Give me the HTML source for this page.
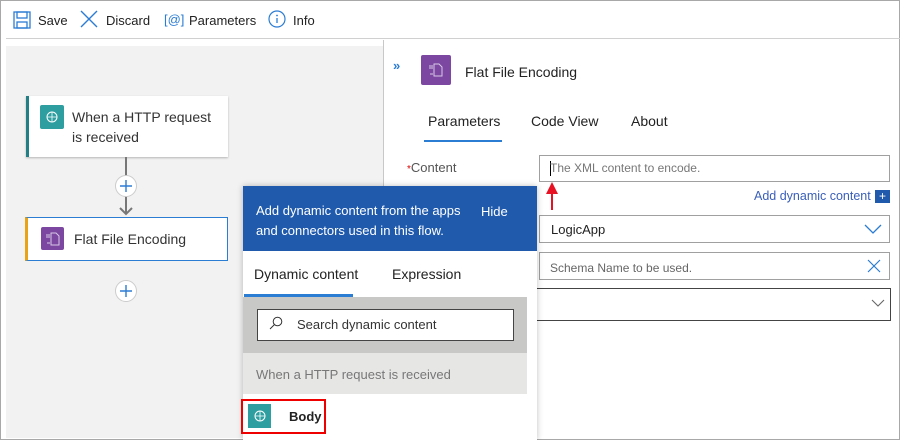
<!DOCTYPE html>
<html><head><style>
*{box-sizing:border-box;margin:0;padding:0}
body{width:900px;height:440px;overflow:hidden;background:#fff;font-family:"Liberation Sans",sans-serif;position:relative;color:#222}
.a{position:absolute}
.t{font-size:13px;white-space:nowrap}
</style></head><body>
<div class="a" style="left:0;top:0;width:900px;height:440px;border:1px solid #a8a8a8"></div>
<!-- toolbar -->
<svg class="a" style="left:13px;top:11px" width="18" height="18" viewBox="0 0 18 18"><rect x="1" y="1" width="16" height="16" fill="none" stroke="#2b7cd3" stroke-width="1.3"/><rect x="4" y="1" width="10" height="6" fill="none" stroke="#2b7cd3" stroke-width="1.3"/><rect x="4" y="11" width="10" height="6" fill="none" stroke="#2b7cd3" stroke-width="1.3"/></svg>
<div class="a t" style="left:38px;top:13px">Save</div>
<svg class="a" style="left:80px;top:10px" width="18" height="18"><path d="M1 1L17 17M17 1L1 17" stroke="#2b7cd3" stroke-width="1.4"/></svg>
<div class="a t" style="left:106px;top:13px">Discard</div>
<div class="a t" style="left:164px;top:12px;color:#2b7cd3">[@]</div>
<div class="a t" style="left:189px;top:13px">Parameters</div>
<svg class="a" style="left:268px;top:10px" width="18" height="18"><circle cx="9" cy="9" r="8" fill="none" stroke="#2b7cd3" stroke-width="1.2"/><path d="M9 8v5" stroke="#2b7cd3" stroke-width="1.3"/><circle cx="9" cy="5.5" r="0.9" fill="#2b7cd3"/></svg>
<div class="a t" style="left:293px;top:13px">Info</div>
<div class="a" style="left:6px;top:38px;width:894px;height:1px;background:#d0d0d0"></div>
<!-- canvas -->
<div class="a" style="left:6px;top:46px;width:377px;height:392px;background:#f2f2f2"></div>
<div class="a" style="left:383px;top:40px;width:1px;height:398px;background:#c8c8c8"></div>
<div class="a" style="left:26px;top:96px;width:202px;height:61px;background:#fff;border-left:3px solid #237f86;box-shadow:0 1px 2px rgba(0,0,0,.25)"></div>
<div class="a" style="left:40px;top:105px;width:24px;height:24px;background:#2f9ea0;border-radius:2px"></div>
<svg class="a" style="left:45px;top:110px" width="14" height="14"><circle cx="7" cy="7" r="5" fill="none" stroke="#fff"/><path d="M2 7h10M7 2v10" stroke="#fff" stroke-width=".8"/></svg>
<div class="a" style="left:72px;top:107px;font-size:14px;line-height:20px;color:#333">When a HTTP request<br>is received</div>
<div class="a" style="left:125px;top:157px;width:2px;height:56px;background:#777"></div>
<svg class="a" style="left:119px;top:205px" width="14" height="12"><path d="M1 3l6 6 6-6" fill="none" stroke="#777" stroke-width="2"/></svg>
<div class="a" style="left:115px;top:175px;width:22px;height:22px;border-radius:50%;background:#fff;border:1px solid #ccc"></div>
<div class="a" style="left:115px;top:280px;width:22px;height:22px;border-radius:50%;background:#fff;border:1px solid #ccc"></div>
<svg class="a" style="left:115px;top:175px" width="22" height="22"><path d="M11 5v12M5 11h12" stroke="#2b7cd3" stroke-width="1.4"/></svg>
<svg class="a" style="left:115px;top:280px" width="22" height="22"><path d="M11 5v12M5 11h12" stroke="#2b7cd3" stroke-width="1.4"/></svg>
<div class="a" style="left:25px;top:217px;width:203px;height:44px;background:#fff;border:1px solid #2b7cd3;border-left:3px solid #e8a317"></div>
<div class="a" style="left:41px;top:227px;width:23px;height:23px;background:#7b47a0;border-radius:2px"></div>
<svg class="a" style="left:45px;top:231px" width="16" height="16"><path d="M6 2h5l3 3v9H6z" fill="none" stroke="#d9c8e6"/><path d="M2 3v4M4 3v4M2 12h3" stroke="#d9c8e6"/></svg>
<div class="a" style="left:74px;top:231px;font-size:14px;color:#333">Flat File Encoding</div>
<!-- right panel -->
<div class="a" style="left:393px;top:58px;font-size:13px;color:#2b7cd3;font-weight:bold">»</div>
<div class="a" style="left:421px;top:55px;width:30px;height:30px;background:#7b47a0;border-radius:2px"></div>
<svg class="a" style="left:428px;top:62px" width="16" height="16"><path d="M6 2h5l3 3v9H6z" fill="none" stroke="#d9c8e6"/><path d="M2 3v4M4 3v4M2 12h3" stroke="#d9c8e6"/></svg>
<div class="a" style="left:465px;top:64px;font-size:14px">Flat File Encoding</div>
<div class="a" style="left:428px;top:113px;font-size:14px">Parameters</div>
<div class="a" style="left:424px;top:140px;width:78px;height:2px;background:#2b7cd3"></div>
<div class="a" style="left:531px;top:113px;font-size:14px">Code View</div>
<div class="a" style="left:631px;top:113px;font-size:14px">About</div>
<div class="a t" style="left:407px;top:160px;color:#555"><span style="color:#d00;font-size:10px">*</span>Content</div>
<div class="a" style="left:539px;top:155px;width:351px;height:27px;border:1px solid #a0a0a0"></div>
<div class="a" style="left:550px;top:161px;width:1px;height:15px;background:#000"></div>
<div class="a" style="left:550px;top:161px;font-size:12px;color:#777">The XML content to encode.</div>
<svg class="a" style="left:544px;top:180px" width="16" height="32"><path d="M8 2L2 14h5v16h2V14h5z" fill="#e81123"/></svg>
<div class="a" style="left:754px;top:189px;font-size:12.5px;color:#3a5fb8">Add dynamic content</div>
<div class="a" style="left:875px;top:190px;width:15px;height:13px;background:#1f5aad;color:#fff;font-size:12px;line-height:12px;text-align:center">+</div>
<div class="a" style="left:539px;top:215px;width:351px;height:28px;border:1px solid #a0a0a0"></div>
<div class="a" style="left:551px;top:222px;font-size:13px">LogicApp</div>
<svg class="a" style="left:864px;top:223px" width="18" height="12"><path d="M1 2l8 8 8-8" fill="none" stroke="#2b7cd3" stroke-width="1.3"/></svg>
<div class="a" style="left:539px;top:252px;width:351px;height:28px;border:1px solid #a0a0a0"></div>
<div class="a" style="left:550px;top:261px;font-size:12px;color:#666">Schema Name to be used.</div>
<svg class="a" style="left:867px;top:259px" width="14" height="14"><path d="M1 1l12 12M13 1L1 13" stroke="#2b7cd3" stroke-width="1.2"/></svg>
<div class="a" style="left:400px;top:288px;width:491px;height:33px;border:1px solid #444"></div>
<svg class="a" style="left:871px;top:298px" width="14" height="10"><path d="M1 2l6 6 6-6" fill="none" stroke="#666" stroke-width="1.1"/></svg>
<!-- popup -->
<div class="a" style="left:243px;top:186px;width:294px;height:254px;background:#fff;box-shadow:0 0 6px rgba(0,0,0,.25)"></div>
<div class="a" style="left:243px;top:186px;width:294px;height:65px;background:#1f5aad"></div>
<div class="a" style="left:256px;top:201px;font-size:13px;line-height:20px;color:#fff">Add dynamic content from the apps<br>and connectors used in this flow.</div>
<div class="a" style="left:481px;top:204px;font-size:13px;color:#fff">Hide</div>
<div class="a" style="left:254px;top:266px;font-size:14px;color:#222">Dynamic content</div>
<div class="a" style="left:392px;top:266px;font-size:14px;color:#222">Expression</div>
<div class="a" style="left:244px;top:294px;width:109px;height:3px;background:#2b7cd3"></div>
<div class="a" style="left:243px;top:297px;width:284px;height:56px;background:#c8c8c6"></div>
<div class="a" style="left:257px;top:309px;width:257px;height:32px;background:#fff;border:1px solid #444"></div>
<svg class="a" style="left:269px;top:316px" width="14" height="14"><circle cx="8.5" cy="5.5" r="4.3" fill="none" stroke="#333"/><path d="M5.5 8.5L1 13" stroke="#333"/></svg>
<div class="a" style="left:297px;top:317px;font-size:13px;color:#333">Search dynamic content</div>
<div class="a" style="left:243px;top:353px;width:284px;height:41px;background:#e6e7e5"></div>
<div class="a" style="left:256px;top:367px;font-size:13px;color:#777">When a HTTP request is received</div>
<div class="a" style="left:241px;top:399px;width:85px;height:35px;border:2px solid #e00"></div>
<div class="a" style="left:248px;top:404px;width:23px;height:24px;background:#2f9ea0"></div>
<svg class="a" style="left:253px;top:409px" width="14" height="14"><circle cx="7" cy="7" r="5" fill="none" stroke="#fff"/><path d="M2 7h10M7 2v10" stroke="#fff" stroke-width=".8"/></svg>
<div class="a" style="left:289px;top:409px;font-size:13px;font-weight:bold">Body</div>
</body></html>
